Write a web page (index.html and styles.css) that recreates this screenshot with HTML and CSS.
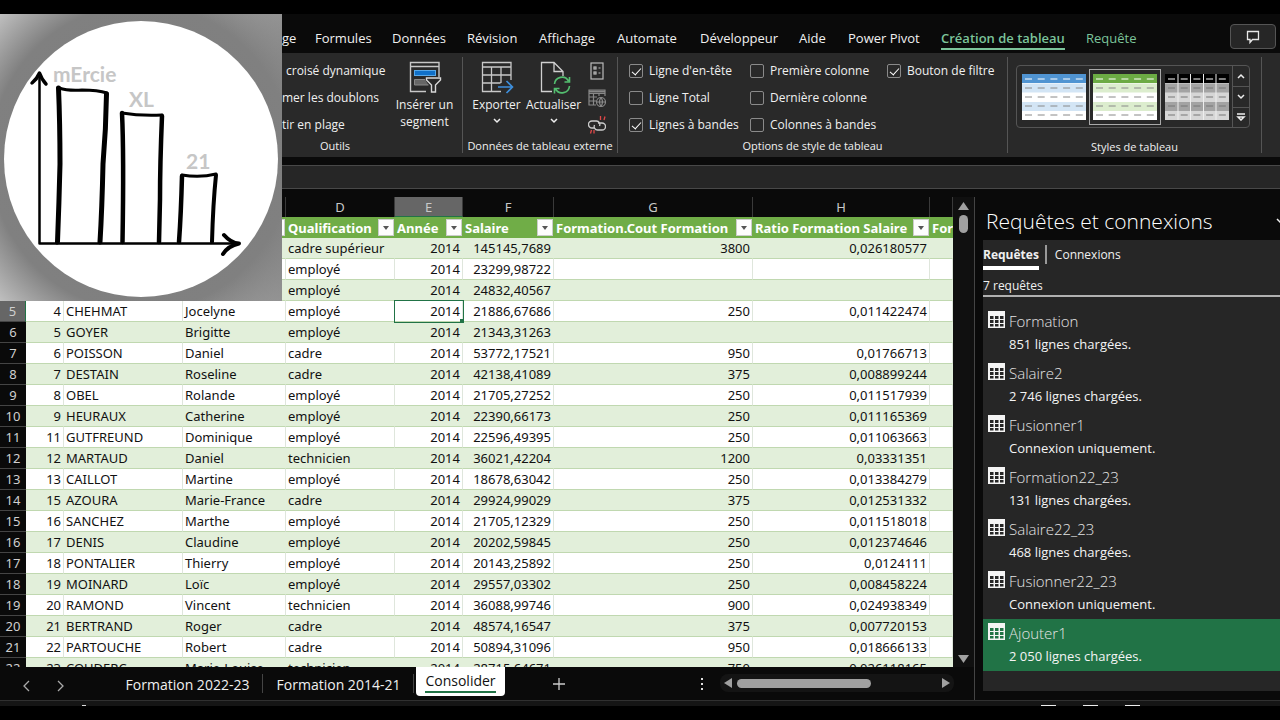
FILE: index.html
```html
<!DOCTYPE html>
<html lang="fr">
<head>
<meta charset="utf-8">
<title>Consolider</title>
<link rel="stylesheet" href="styles.css">
</head>
<body>
<div class="app">
  <svg class="logo" viewBox="0 0 282 287" role="img" aria-label="mErcie XL 21">
    <defs>
      <radialGradient id="halo" cx="50%" cy="50%" r="72%">
        <stop offset="0" stop-color="#7c7c7c"/><stop offset=".74" stop-color="#808080"/><stop offset="1" stop-color="#c4c4c4"/>
      </radialGradient>
      <linearGradient id="side" x1="0" x2="1" y1="0" y2="0">
        <stop offset="0" stop-color="#808080" stop-opacity="0"/><stop offset=".5" stop-color="#808080" stop-opacity="0"/><stop offset="1" stop-color="#808080" stop-opacity=".7"/>
      </linearGradient>
    </defs>
    <rect width="282" height="287" fill="url(#halo)"/>
    <rect width="282" height="287" fill="url(#side)"/>
    <ellipse cx="141" cy="145" rx="137" ry="138" fill="#fff"/>
    <g class="logo-text">
      <text x="53" y="68">mErcie</text>
      <text x="129" y="93">XL</text>
      <text x="186" y="155">21</text>
    </g>
    <g fill="none" stroke="#000" stroke-linecap="round" stroke-linejoin="round">
      <path d="M39.500 60V229.500H238" stroke-width="2.500"/>
      <path d="M32 69Q37 65 39.500 59Q42 66 46 70" stroke-width="3.500"/>
      <path d="M224 221Q231 229 239 229.500Q228 232 223 240" stroke-width="4"/>
      <path d="M58.500 74Q60 110 60 150Q59 190 57.500 228" stroke-width="5"/>
      <path d="M59 74Q68 77 82 76Q98 76 107 79" stroke-width="3"/>
      <path d="M106.500 80Q106 115 103 150Q102 195 100 228" stroke-width="5"/>
      <path d="M122 99Q124 140 122.500 228" stroke-width="4.500"/>
      <path d="M122 99Q140 102 162 101" stroke-width="3"/>
      <path d="M162 102Q160 150 160 185L159 228" stroke-width="4.500"/>
      <path d="M182 162Q181 200 179 228" stroke-width="4.500"/>
      <path d="M182 161Q200 164 216 160" stroke-width="3"/>
      <path d="M216 161Q213 190 212 228" stroke-width="4"/>
    </g>
  </svg>

  <nav class="menu">
    <button class="tab">ge</button>
    <button class="tab">Formules</button>
    <button class="tab">Données</button>
    <button class="tab">Révision</button>
    <button class="tab">Affichage</button>
    <button class="tab">Automate</button>
    <button class="tab">Développeur</button>
    <button class="tab">Aide</button>
    <button class="tab">Power Pivot</button>
    <button class="tab tab-active"><span>Création de tableau</span></button>
    <button class="tab tab-green">Requête</button>
    <button class="comment" aria-label="Commentaires">
      <svg width="14" height="14" viewBox="0 0 14 14" fill="none" stroke="#e8e8e8" stroke-width="1.300"><path d="M1.500 1.500h11v8h-6l-2.500 3v-3h-2.500z"/></svg>
    </button>
  </nav>

  <section class="ribbon">
    <div class="group tools">
      <div class="group-body">
        <div class="links">
          <button class="link">croisé dynamique</button>
          <button class="link link-cut">mer les doublons</button>
          <button class="link link-cut">tir en plage</button>
        </div>
        <button class="big">
          <svg width="32" height="32" viewBox="0 0 32 32" fill="none"><path d="M17 30.500H1.500V1.500h28.500V16M1.500 5.500h28.500" stroke="#c8c8c8" stroke-width="1.400"/><rect x="5.500" y="9.500" width="21" height="5" fill="#1070c8" stroke="#58a8e8"/><path d="M16 18.500H5.500v5.500h14" fill="#666" stroke="#888"/><path d="M17.500 17h14v2l-5 5v7h-4v-7l-5-5z" fill="#292929" stroke="#d8d8d8" stroke-width="1.400"/></svg>
          <span>Insérer un<br>segment</span>
        </button>
      </div>
      <h2 class="group-name">Outils</h2>
    </div>
    <div class="group external">
      <div class="group-body">
        <button class="big">
          <svg width="32" height="32" viewBox="0 0 32 32" fill="none"><path d="M20 30.500H1.500V1.500h28.500V19M1.500 6h28.500M1.500 14h28.500M1.500 22h18M10.500 6v24M20 6v16" stroke="#c8c8c8" stroke-width="1.300"/><path d="M17 26h14M25.500 20l6 6-6 6" stroke="#3e8fdc" stroke-width="1.600"/></svg>
          <span>Exporter</span>
          <svg class="chev" width="8" height="6" viewBox="0 0 8 6"><path d="M1 1l3 3 3-3"/></svg>
        </button>
        <button class="big">
          <svg width="32" height="32" viewBox="0 0 32 32" fill="none"><path d="M14 30.500H3.500V1.500H16l9 9V15M16 1.500v9h9" stroke="#d0d0d0" stroke-width="1.300"/><path d="M16.500 23a7.500 7.500 0 0 1 14-3M31.500 16v5h-5M31.500 25a7.500 7.500 0 0 1-14 3M16.500 32.500v-5h5" stroke="#54bf70" stroke-width="1.600"/></svg>
          <span>Actualiser</span>
          <svg class="chev" width="8" height="6" viewBox="0 0 8 6"><path d="M1 1l3 3 3-3"/></svg>
        </button>
        <div class="minis">
          <button aria-label="Propriétés"><svg width="18" height="18" viewBox="0 0 18 18" fill="none" stroke="#bbb" stroke-width="1.200"><rect x="3" y="1" width="12" height="16"/><rect x="6" y="5" width="2" height="2"/><rect x="6" y="10" width="2" height="2"/><path d="M10.500 6h2M10.500 11h2"/></svg></button>
          <button aria-label="Ouvrir dans le navigateur"><svg width="18" height="18" viewBox="0 0 18 18" fill="none" stroke="#888" stroke-width="1.200"><path d="M8 16H1V1h16v6M1 4.500h16M1 8h8M1 12h7M5.500 4.500V16M11 4.500V7"/><path d="M1 2.500h16" stroke-width="2"/><circle cx="13" cy="13" r="4.500"/><path d="M8.500 13h9M13 8.500q-3 4.500 0 9q3-4.500 0-9"/></svg></button>
          <button aria-label="Supprimer la liaison"><svg width="18" height="18" viewBox="0 0 18 18" fill="none" stroke="#ccc" stroke-width="1.300"><path d="M6.500 12H4a3.500 3.500 0 0 1 0-7h4.500a3.500 3.500 0 0 1 3 5M10 7h4a3.500 3.500 0 0 1 0 7H9.500a3.500 3.500 0 0 1-3-5"/><path d="M12.500 4V0M16 4l1-3.500M2.500 17.500l1-3.500M6 17.500V14" stroke="#e04848"/></svg></button>
        </div>
      </div>
      <h2 class="group-name">Données de tableau externe</h2>
    </div>
    <div class="group options">
      <div class="group-body checks">
        <label><input type="checkbox" checked>Ligne d'en-tête</label>
        <label><input type="checkbox">Première colonne</label>
        <label><input type="checkbox" checked>Bouton de filtre</label>
        <label><input type="checkbox">Ligne Total</label>
        <label class="col2"><input type="checkbox">Dernière colonne</label>
        <label class="col1"><input type="checkbox" checked>Lignes à bandes</label>
        <label class="col2"><input type="checkbox">Colonnes à bandes</label>
      </div>
      <h2 class="group-name">Options de style de tableau</h2>
    </div>
    <div class="group styles">
      <div class="gallery">
        <button class="thumb" aria-label="Style bleu">
          <svg width="64" height="46" viewBox="0 0 64 46"><rect width="64" height="46" fill="#fff"/><rect width="64" height="9" fill="#5094d2"/><path d="M0 14h64M0 32.500h64" stroke="#d3e5f5" stroke-width="9"/><path d="M3 5h58" stroke="#fff" stroke-dasharray="7 5.700"/><path d="M3 14h58M3 23h58M3 32h58M3 41h58" stroke="#888" stroke-dasharray="7 5.700"/></svg>
        </button>
        <button class="thumb thumb-on" aria-label="Style vert">
          <svg width="64" height="46" viewBox="0 0 64 46"><rect width="64" height="46" fill="#fff"/><rect width="64" height="9" fill="#6cab44"/><path d="M0 14h64M0 32.500h64" stroke="#dcedce" stroke-width="9"/><path d="M3 5h58" stroke="#fff" stroke-dasharray="7 5.700"/><path d="M3 14h58M3 23h58M3 32h58M3 41h58" stroke="#888" stroke-dasharray="7 5.700"/></svg>
        </button>
        <button class="thumb" aria-label="Style gris">
          <svg width="64" height="46" viewBox="0 0 64 46"><rect width="64" height="46" fill="#d6d6d6"/><path d="M0 14h64M0 32.500h64" stroke="#a3a3a3" stroke-width="9"/><path d="M0 4.500h64" stroke="#000" stroke-width="9"/><path d="M3 5h58" stroke="#fff" stroke-dasharray="7 5.700"/><path d="M3 14h58M3 23h58M3 32h58M3 41h58" stroke="#777" stroke-dasharray="7 5.700"/><path d="M13 0v46M25.500 0v46M38.500 0v46M51 0v46" stroke="#eee"/></svg>
        </button>
        <div class="spin">
          <button aria-label="Précédent"><svg width="8" height="6" viewBox="0 0 8 6"><path d="M1 5l3-3 3 3"/></svg></button>
          <button aria-label="Suivant"><svg width="8" height="6" viewBox="0 0 8 6"><path d="M1 1l3 3 3-3"/></svg></button>
          <button aria-label="Autres"><svg width="10" height="8" viewBox="0 0 10 8"><path d="M1 1h8M2 4h6l-3 3z"/></svg></button>
        </div>
      </div>
      <h2 class="group-name">Styles de tableau</h2>
    </div>
  </section>

  <div class="formula"></div>

  <main class="work">
    <div class="book">
      <div class="view">
        <div class="sheet">
          <table>
            <colgroup><col class="c0"><col class="cA"><col class="cB"><col class="cC"><col class="cD"><col class="cE"><col class="cF"><col class="cG"><col class="cH"><col class="cI"></colgroup>
            <thead>
              <tr class="letters"><th></th><th></th><th></th><th></th><th>D</th><th class="on">E</th><th>F</th><th>G</th><th>H</th><th></th></tr>
              <tr class="fields"><th></th><th></th><th></th><th><div><span></span><button aria-label="Filtrer"></button></div></th><th><div><span>Qualification</span><button aria-label="Filtrer"></button></div></th><th><div><span>Année</span><button aria-label="Filtrer"></button></div></th><th><div><span>Salaire</span><button aria-label="Filtrer"></button></div></th><th><div><span>Formation.Cout Formation</span><button aria-label="Filtrer"></button></div></th><th><div><span>Ratio Formation Salaire</span><button aria-label="Filtrer"></button></div></th><th><div><span>For</span></div></th></tr>
            </thead>
            <tbody>
              <tr><th></th><td></td><td></td><td></td><td>cadre supérieur</td><td>2014</td><td>145145,7689</td><td>3800</td><td>0,026180577</td><td></td></tr>
              <tr><th></th><td></td><td></td><td></td><td>employé</td><td>2014</td><td>23299,98722</td><td></td><td></td><td></td></tr>
              <tr><th></th><td></td><td></td><td></td><td>employé</td><td>2014</td><td>24832,40567</td><td></td><td></td><td></td></tr>
              <tr><th class="on">5</th><td>4</td><td>CHEHMAT</td><td>Jocelyne</td><td>employé</td><td class="cursor">2014</td><td>21886,67686</td><td>250</td><td>0,011422474</td><td></td></tr>
              <tr><th>6</th><td>5</td><td>GOYER</td><td>Brigitte</td><td>employé</td><td>2014</td><td>21343,31263</td><td></td><td></td><td></td></tr>
              <tr><th>7</th><td>6</td><td>POISSON</td><td>Daniel</td><td>cadre</td><td>2014</td><td>53772,17521</td><td>950</td><td>0,01766713</td><td></td></tr>
              <tr><th>8</th><td>7</td><td>DESTAIN</td><td>Roseline</td><td>cadre</td><td>2014</td><td>42138,41089</td><td>375</td><td>0,008899244</td><td></td></tr>
              <tr><th>9</th><td>8</td><td>OBEL</td><td>Rolande</td><td>employé</td><td>2014</td><td>21705,27252</td><td>250</td><td>0,011517939</td><td></td></tr>
              <tr><th>10</th><td>9</td><td>HEURAUX</td><td>Catherine</td><td>employé</td><td>2014</td><td>22390,66173</td><td>250</td><td>0,011165369</td><td></td></tr>
              <tr><th>11</th><td>11</td><td>GUTFREUND</td><td>Dominique</td><td>employé</td><td>2014</td><td>22596,49395</td><td>250</td><td>0,011063663</td><td></td></tr>
              <tr><th>12</th><td>12</td><td>MARTAUD</td><td>Daniel</td><td>technicien</td><td>2014</td><td>36021,42204</td><td>1200</td><td>0,03331351</td><td></td></tr>
              <tr><th>13</th><td>13</td><td>CAILLOT</td><td>Martine</td><td>employé</td><td>2014</td><td>18678,63042</td><td>250</td><td>0,013384279</td><td></td></tr>
              <tr><th>14</th><td>15</td><td>AZOURA</td><td>Marie-France</td><td>cadre</td><td>2014</td><td>29924,99029</td><td>375</td><td>0,012531332</td><td></td></tr>
              <tr><th>15</th><td>16</td><td>SANCHEZ</td><td>Marthe</td><td>employé</td><td>2014</td><td>21705,12329</td><td>250</td><td>0,011518018</td><td></td></tr>
              <tr><th>16</th><td>17</td><td>DENIS</td><td>Claudine</td><td>employé</td><td>2014</td><td>20202,59845</td><td>250</td><td>0,012374646</td><td></td></tr>
              <tr><th>17</th><td>18</td><td>PONTALIER</td><td>Thierry</td><td>employé</td><td>2014</td><td>20143,25892</td><td>250</td><td>0,0124111</td><td></td></tr>
              <tr><th>18</th><td>19</td><td>MOINARD</td><td>Loïc</td><td>employé</td><td>2014</td><td>29557,03302</td><td>250</td><td>0,008458224</td><td></td></tr>
              <tr><th>19</th><td>20</td><td>RAMOND</td><td>Vincent</td><td>technicien</td><td>2014</td><td>36088,99746</td><td>900</td><td>0,024938349</td><td></td></tr>
              <tr><th>20</th><td>21</td><td>BERTRAND</td><td>Roger</td><td>cadre</td><td>2014</td><td>48574,16547</td><td>375</td><td>0,007720153</td><td></td></tr>
              <tr><th>21</th><td>22</td><td>PARTOUCHE</td><td>Robert</td><td>cadre</td><td>2014</td><td>50894,31096</td><td>950</td><td>0,018666133</td><td></td></tr>
              <tr><th>22</th><td>23</td><td>COUDERC</td><td>Marie-Louise</td><td>technicien</td><td>2014</td><td>28715,64671</td><td>750</td><td>0,026118165</td><td></td></tr>
            </tbody>
          </table>
        </div>
        <div class="vscroll">
          <svg width="11" height="8" viewBox="0 0 11 8"><path d="M5.500 0L11 8H0z"/></svg>
          <div class="vthumb"></div>
          <svg width="11" height="8" viewBox="0 0 11 8"><path d="M5.500 8L11 0H0z"/></svg>
        </div>
      </div>
      <div class="sheetbar">
        <div class="arrows">
          <button aria-label="Feuille précédente"><svg width="7" height="12" viewBox="0 0 7 12"><path d="M6 1L1 6l5 5"/></svg></button>
          <button aria-label="Feuille suivante"><svg width="7" height="12" viewBox="0 0 7 12"><path d="M1 1l5 5-5 5"/></svg></button>
        </div>
        <button class="leaf">Formation 2022-23</button>
        <button class="leaf">Formation 2014-21</button>
        <button class="leaf leaf-on"><span>Consolider</span></button>
        <button class="add" aria-label="Nouvelle feuille"><svg width="12" height="12" viewBox="0 0 12 12"><path d="M6 0v12M0 6h12"/></svg></button>
        <svg class="dots" width="4" height="12" viewBox="0 0 4 12" fill="#ddd"><path d="M1 0h2v2H1zM1 5h2v2H1zM1 10h2v2H1z"/></svg>
        <div class="hscroll">
          <svg width="8" height="10" viewBox="0 0 8 10"><path d="M0 5L8 0v10z"/></svg>
          <div class="hthumb"></div>
          <svg width="8" height="10" viewBox="0 0 8 10"><path d="M8 5L0 0v10z"/></svg>
        </div>
      </div>
    </div>
    <aside class="pane">
      <header class="pane-head">
        <h1>Requêtes et connexions</h1>
        <svg width="8" height="6" viewBox="0 0 8 6"><path d="M1 1l3 3 3-3"/></svg>
      </header>
      <div class="pane-body">
        <div class="pane-tabs"><button class="pane-on">Requêtes</button><button class="pane-off">Connexions</button></div>
        <p class="count">7 requêtes</p>
        <svg width="0" height="0" class="defs"><symbol id="grid" viewBox="0 0 17 17"><rect width="17" height="17" fill="#f4f4f4"/><path d="M2 5h3.500v3H2zM7 5h3.500v3H7zM12 5h3.500v3H12zM2 9h3.500v3H2zM7 9h3.500v3H7zM12 9h3.500v3H12zM2 13h3.500v2.500H2zM7 13h3.500v2.500H7zM12 13h3.500v2.500H12z" fill="currentColor"/></symbol></svg>
        <ul class="queries">
          <li><svg width="17" height="17"><use href="#grid"/></svg><div><h3>Formation</h3><p>851 lignes chargées.</p></div></li>
          <li><svg width="17" height="17"><use href="#grid"/></svg><div><h3>Salaire2</h3><p>2 746 lignes chargées.</p></div></li>
          <li><svg width="17" height="17"><use href="#grid"/></svg><div><h3>Fusionner1</h3><p>Connexion uniquement.</p></div></li>
          <li><svg width="17" height="17"><use href="#grid"/></svg><div><h3>Formation22_23</h3><p>131 lignes chargées.</p></div></li>
          <li><svg width="17" height="17"><use href="#grid"/></svg><div><h3>Salaire22_23</h3><p>468 lignes chargées.</p></div></li>
          <li><svg width="17" height="17"><use href="#grid"/></svg><div><h3>Fusionner22_23</h3><p>Connexion uniquement.</p></div></li>
          <li class="picked"><svg width="17" height="17"><use href="#grid"/></svg><div><h3>Ajouter1</h3><p>2 050 lignes chargées.</p></div></li>
        </ul>
      </div>
    </aside>
  </main>

  <footer class="status"><i class="mark"></i><div class="modes"><i></i><i></i><i></i></div></footer>
</div>
</body>
</html>
```

FILE: styles.css
```css
* { box-sizing: border-box; margin: 0; padding: 0; }
body { background: #000; color: #f0f0f0; font-family: "Open Sans", "Noto Sans", sans-serif; font-size: 12px; }
button { background: none; border: 0; color: inherit; font: inherit; }
ul { list-style: none; }
.app { position: relative; display: flex; flex-direction: column; height: 100vh; padding: 14px 0; overflow: hidden; }
.logo { position: absolute; z-index: 2; left: 0; top: 14px; width: 282px; height: 287px; }
.logo-text { fill: #c6c6c6; font: bold 21px Lato, sans-serif; }

.menu { display: grid; grid-template-columns: 33px 77px 75px 72px 78px 83px 99px 49px 93px 145px 1fr auto; height: 39px; padding-left: 282px; background: #0a0a0a; flex: none; }
.tab { text-align: left; white-space: nowrap; font-size: 13px; padding-top: 8px; line-height: 28px; }
.tab-active { color: #7cc49b; font-weight: 600; }
.tab-active span { display: inline-block; line-height: 20px; border-bottom: 2px solid #7cc49b; }
.tab-green { color: #7cc49b; }
.comment { width: 46px; height: 25px; margin: 10px 4px 0 0; border: 1px solid #555; border-radius: 4px; background: #262626; display: flex; align-items: center; justify-content: center; }

.ribbon { display: flex; flex: none; height: 104px; padding: 4px 0 4px 282px; background: #292929; white-space: nowrap; }
.group { display: flex; flex-direction: column; border-right: 1px solid #555; }
.group-body { flex: 1; display: flex; }
.group-name { font-size: 11px; font-weight: 400; line-height: 16px; margin-bottom: 0; text-align: center; }
.tools { width: 181px; }
.tools .group-name { text-align: left; padding-left: 38px; }
.tools .group-body { justify-content: space-between; padding-right: 9px; }
.links { display: grid; grid-auto-rows: 27px; }
.link { text-align: left; padding-left: 4px; }
.link-cut { padding-left: 0; }
.big { display: flex; flex-direction: column; align-items: center; padding-top: 4px; line-height: 17px; gap: 3px; width: 57px; }
.big svg { overflow: visible; }
.big .chev { margin-top: 2px; }
.chev, .spin svg, .pane-head svg { fill: none; stroke: #eee; stroke-width: 1.5; }
.external { width: 155px; }
.external .group-body { padding: 0 6px 0 5px; }
.minis { display: grid; grid-auto-rows: 27px; margin-left: auto; width: 28px; }
.minis button { display: flex; align-items: center; justify-content: center; }
.options { width: 390px; }
.checks { display: grid; grid-template-columns: 121px 137px 1fr; grid-auto-rows: 27px; padding-left: 11px; align-content: start; }
.checks label { display: flex; align-items: center; gap: 6px; }
.col1 { grid-column: 1; }
.col2 { grid-column: 2; }
.checks input { appearance: none; width: 14px; height: 14px; border: 1px solid #8a8a8a; border-radius: 2px; display: flex; justify-content: center; }
.checks input:checked::after { content: ""; width: 4px; height: 8px; margin-top: 1px; border: solid #fff; border-width: 0 1px 1px 0; transform: rotate(42deg); }
.styles { width: 254px; justify-content: space-between; }
.gallery { flex: none; display: flex; align-items: center; height: 63px; margin: 8px 11px 0 8px; border: 1px solid #555; border-radius: 4px; overflow: hidden; }
.thumb { display: flex; flex: none; align-items: center; justify-content: center; width: 70px; height: 56px; margin-left: 2px; }
.thumb-on { width: 72px; margin: 0; border: 1px solid #aaa; }
.thumb-on + .thumb { margin-left: 1px; }
.spin { margin-left: auto; width: 17px; align-self: stretch; display: grid; grid-template-rows: 1fr 1fr 1fr; border-left: 1px solid #555; }
.spin button { display: flex; align-items: center; justify-content: center; }
.spin button + button { border-top: 1px solid #555; }
.styles .group-name { line-height: 12px; }

.formula { flex: none; height: 40px; border: solid #0a0a0a; border-width: 8px 0; background: #262626; box-shadow: inset 0 1px #484848, inset 0 -1px #484848; }

.work { flex: 1; display: flex; min-height: 0; background: #0a0a0a; }
.book { flex: 1; min-width: 0; display: flex; flex-direction: column; }
.view { flex: 1; min-height: 0; display: flex; }
.sheet { flex: 1; min-width: 0; overflow: hidden; }
table { table-layout: fixed; border-collapse: separate; border-spacing: 0; width: 953px; min-width: 100%; font-family: "Noto Sans", "Open Sans", sans-serif; font-size: 13px; color: #111; }
.c0 { width: 26px; } .cA { width: 38px; } .cB { width: 119px; } .cC { width: 103px; } .cD { width: 109px; }
.cE { width: 68px; } .cF { width: 91px; } .cG { width: 199px; } .cH { width: 177px; }
td, th { height: 21px; line-height: 20px; white-space: nowrap; overflow: hidden; }
td { padding: 0 2px; border-bottom: 1px solid #c0d8b0; border-right: 1px solid #dfe6dc; background: #fff; }
tbody tr:nth-child(odd) td { background: #e2efda; border-right-color: #e2efda; }
td:nth-child(2), td:nth-child(n+6) { text-align: right; }
tbody th { background: #0a0a0a; color: #d0d0d0; font-weight: 400; border-bottom: 1px solid #444; }
.letters th { height: 20px; line-height: 19px; padding-top: 1px; background: #0a0a0a; color: #c8c8c8; font-weight: 400; border-right: 1px solid #3a3a3a; }
.letters .on, tbody .on { background: #666; }
.letters .on { border-bottom: 1px solid #217346; line-height: 18px; }
tbody .on { border-right: 1px solid #217346; }
.fields th { background: #70ad47; color: #fff; padding: 0 1px 0 2px; }
.fields th:first-child { background: #0a0a0a; }
.fields div { display: flex; align-items: center; justify-content: space-between; }
.fields button { flex: none; width: 16px; height: 17px; background: #fdfdfd; border: 1px solid #ccc; display: flex; align-items: center; justify-content: center; }
.fields button::after { content: ""; border: 3px solid transparent; border-top: 4px solid #555; border-bottom: 0; }
td.cursor { position: relative; overflow: visible; outline: 1px solid #217346; }
td.cursor::after { content: ""; position: absolute; right: -2px; bottom: -2px; width: 4px; height: 4px; background: #217346; }
.vscroll { flex: none; width: 21px; display: flex; flex-direction: column; align-items: center; padding: 5px 0 4px; fill: #a0a0a0; background: #101010; }
.vthumb { width: 9px; height: 18px; margin: 5px 0 auto; border-radius: 5px; background: #a0a0a0; }

.sheetbar { flex: none; display: flex; height: 33px; padding-right: 20px; font-size: 14px; }
.arrows { width: 112px; padding: 10px 0 0 23px; display: flex; gap: 27px; align-items: flex-start; fill: none; stroke: #aaa; stroke-width: 1.3; }
.leaf { position: relative; width: 151px; padding-top: 2px; white-space: nowrap; }
.leaf:not(.leaf-on)::after { content: ""; position: absolute; right: 0; top: 7px; height: 19px; border-right: 1px solid #444; }
.leaf-on { width: 89px; height: 29px; margin-left: 2px; padding: 0; background: #fff; color: #111; border-radius: 0 0 4px 4px; }
.leaf-on span { display: inline-block; line-height: 20px; border-bottom: 2px solid #217346; }
.add { padding: 0 48px; fill: none; stroke: #ccc; stroke-width: 1.3; display: flex; align-items: center; }
.dots { margin: 11px 16px 0 auto; }
.hscroll { width: 234px; height: 18px; margin-top: 7px; display: flex; align-items: center; padding: 0 4px; gap: 4px; fill: #a0a0a0; background: #141414; border-radius: 8px; }
.hthumb { width: 134px; height: 9px; margin: 0 auto 0 1px; border-radius: 5px; background: #a0a0a0; }

.pane { flex: none; width: 306px; display: flex; flex-direction: column; padding: 0 0 9px 8px; border-left: 1px solid #444; }
.pane-head { display: flex; align-items: center; justify-content: space-between; height: 43px; padding: 4px 0 0 3px; margin-right: -4px; white-space: nowrap; }
h1 { font-size: 21px; font-weight: 300; color: #fff; }
.pane-body { flex: 1; min-height: 0; background: #262626; overflow: hidden; }
.pane-tabs { display: flex; height: 30px; }
.pane-on { font-weight: 700; border-bottom: 4px solid #fff; height: 30px; padding-top: 2px; }
.pane-off { padding: 0 0 0 8px; margin: 5px 0 6px 6px; border-left: 2px solid #999; }
.count { font-size: 12px; line-height: 20px; padding-top: 6px; height: 27px; border-bottom: 2px solid #b0b0b0; }
.defs { position: absolute; }
.queries { padding-top: 10px; }
.queries li { display: flex; gap: 4px; height: 52px; padding: 4px 5px 0; color: #262626; }
.queries li > svg { flex: none; }
.queries h3 { font-size: 15px; font-weight: 300; line-height: 20px; color: #e4e4e4; }
.queries p { font-size: 13px; line-height: 18px; margin-top: 4px; color: #f4f4f4; }
.queries .picked { background: #217346; color: #217346; }

.status { flex: none; display: flex; justify-content: space-between; height: 6px; background: #151515; border-top: 1px solid #303030; align-items: flex-end; }
.mark { width: 4px; height: 1px; margin-left: 82px; background: #ddd; }
.modes { display: flex; gap: 27px; padding-right: 140px; }
.modes i { width: 15px; height: 1px; background: #eee; }
```
